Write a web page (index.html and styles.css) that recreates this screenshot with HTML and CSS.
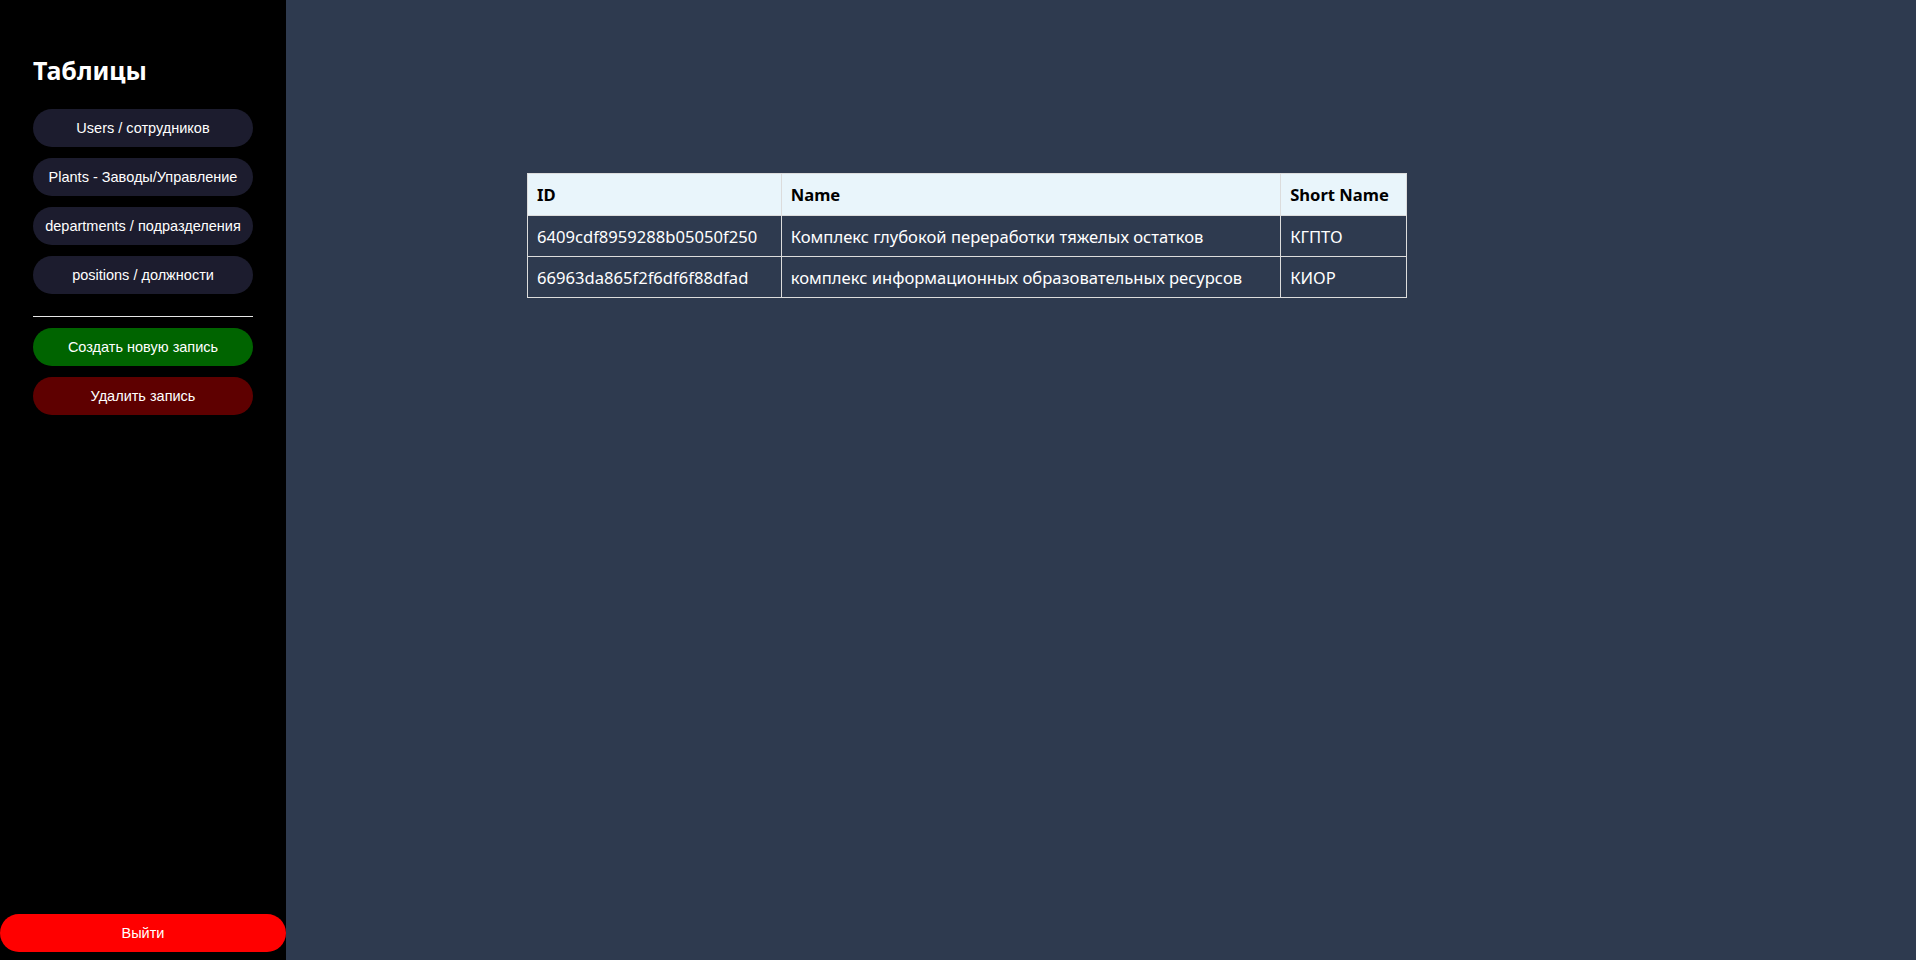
FILE: index.html
```html
<!DOCTYPE html>
<html lang="ru">
<head>
<meta charset="utf-8">
<title>Таблицы</title>
<link rel="stylesheet" href="styles.css">
</head>
<body>
<div class="app">
  <aside class="sidebar">
    <h2 class="sidebar-title">Таблицы</h2>
    <nav class="nav">
      <button class="pill pill-nav">Users / сотрудников</button>
      <button class="pill pill-nav">Plants - Заводы/Управление</button>
      <button class="pill pill-nav">departments / подразделения</button>
      <button class="pill pill-nav">positions / должности</button>
    </nav>
    <hr class="divider">
    <div class="actions">
      <button class="pill pill-create">Создать новую запись</button>
      <button class="pill pill-delete">Удалить запись</button>
    </div>
    <div class="spacer"></div>
    <button class="pill pill-logout">Выйти</button>
  </aside>
  <main class="main">
    <table class="data-table">
      <thead>
        <tr>
          <th class="col-id">ID</th>
          <th class="col-name">Name</th>
          <th class="col-short">Short Name</th>
        </tr>
      </thead>
      <tbody>
        <tr>
          <td>6409cdf8959288b05050f250</td>
          <td>Комплекс глубокой переработки тяжелых остатков</td>
          <td>КГПТО</td>
        </tr>
        <tr>
          <td>66963da865f2f6df6f88dfad</td>
          <td>комплекс информационных образовательных ресурсов</td>
          <td>КИОР</td>
        </tr>
      </tbody>
    </table>
  </main>
</div>
</body>
</html>
```

FILE: styles.css
```css
* { box-sizing: border-box; }

html, body {
  margin: 0;
  padding: 0;
  height: 100%;
}

body {
  font-family: "Noto Sans", "Open Sans", sans-serif;
  background: #2e3a4f;
  color: #ffffff;
}

.app {
  display: flex;
  height: 960px;
}

.sidebar {
  width: 286px;
  flex: 0 0 286px;
  background: #000000;
  display: flex;
  flex-direction: column;
  padding: 0 0 8px 0;
}

.sidebar-title {
  margin: 54px 33px 22px 33px;
  font-size: 25px;
  line-height: 33px;
  font-weight: 700;
  color: #ffffff;
}

.nav, .actions {
  display: flex;
  flex-direction: column;
  gap: 11px;
  padding: 0 33px;
}

.pill {
  font-family: "Liberation Sans", Arial, sans-serif;
  font-size: 14.5px;
  color: #ffffff;
  border: none;
  border-radius: 19px;
  height: 38px;
  padding: 0 6px;
  text-align: center;
  cursor: pointer;
  white-space: nowrap;
}

.pill-nav { background: #1c1c2e; }
.pill-create { background: #006400; }
.pill-delete { background: #5e0000; }

.divider {
  margin: 22px 33px 11px 33px;
  border: none;
  border-top: 1px solid #e6e6e6;
  height: 0;
}

.spacer { flex: 1; }

.pill-logout {
  background: #ff0000;
  width: 286px;
}

.main {
  flex: 1;
  padding: 173px 0 0 241px;
}

.data-table {
  border-collapse: collapse;
  font-size: 16.6px;
  width: 880px;
}

.data-table th,
.data-table td {
  border: 1px solid #dcdcdc;
  padding: 0 8px 0 9px;
  text-align: left;
  white-space: nowrap;
}

.data-table th {
  background: #e9f5fb;
  color: #000000;
  font-weight: 700;
  height: 42px;
}

.data-table td {
  height: 41px;
  color: #ffffff;
}

.col-id { width: 254px; }
.col-name { width: 500px; }
.col-short { width: 126px; }
```
